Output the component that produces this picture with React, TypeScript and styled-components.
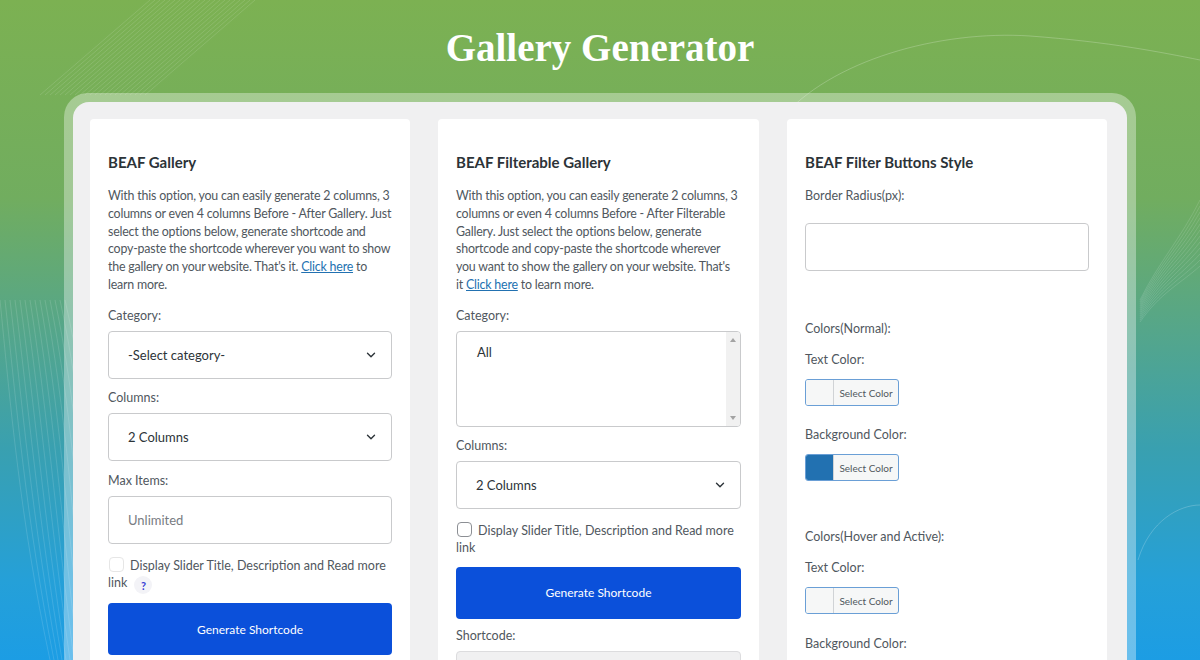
import React from 'react';
import styled, { createGlobalStyle } from 'styled-components';
import { ChevronDown } from 'lucide-react';

const GlobalStyle = createGlobalStyle`
  html, body {
    margin: 0;
    padding: 0;
    overflow: hidden;
  }
  * {
    box-sizing: border-box;
  }
  body {
    font-family: Lato, 'Noto Sans', sans-serif;
    color: #50575e;
  }
`;

const Decor = () => (
  <DecorSvg viewBox="0 0 1200 660" preserveAspectRatio="none">
    <g stroke="#ffffff" strokeOpacity="0.13" fill="none" strokeWidth="1">
      {Array.from({ length: 22 }).map((_, i) => (
        <line key={`d${i}`} x1={150 + i * 5} y1={0} x2={40 + i * 5} y2={95} />
      ))}
      <path d="M780 120 C 830 60, 940 30, 1030 36 C 1110 42, 1160 52, 1200 60" strokeOpacity="0.22" />
      {Array.from({ length: 14 }).map((_, i) => (
        <path
          key={`l${i}`}
          d={`M${i * 5} 300 C ${10 + i * 6} 400, ${20 + i * 6} 520, ${50 + i * 4} 660`}
        />
      ))}
      {Array.from({ length: 12 }).map((_, i) => (
        <path
          key={`r${i}`}
          d={`M1140 ${300 + i * 2} C 1160 ${260 + i * 3}, 1180 ${240 + i * 4}, 1200 ${200 + i * 6}`}
        />
      ))}
      <path d="M1138 560 C 1150 520, 1180 505, 1200 505" strokeOpacity="0.2" />
    </g>
  </DecorSvg>
);

const ColorButton = ({ swatch }: { swatch?: string }) => (
  <ColorPick>
    <Swatch $color={swatch} />
    <ColorText>Select Color</ColorText>
  </ColorPick>
);

const SelectBox = ({ value }: { value: string }) => (
  <Control>
    <span>{value}</span>
    <ChevronDown size={14} strokeWidth={2.4} color="#2c3338" />
  </Control>
);

export default function App() {
  return (
    <>
      <GlobalStyle />
      <Page>
        <Decor />
        <Title>Gallery Generator</Title>
        <Frame>
          <Panel>
            <Card>
              <CardTitle>BEAF Gallery</CardTitle>
              <Intro>
                With this option, you can easily generate 2 columns, 3<br />
                columns or even 4 columns Before - After Gallery. Just<br />
                select the options below, generate shortcode and<br />
                copy-paste the shortcode wherever you want to show<br />
                the gallery on your website. That's it. <a href="#">Click here</a> to<br />
                learn more.
              </Intro>
              <Label $mt={13}>Category:</Label>
              <SelectBox value="-Select category-" />
              <Label $mt={10}>Columns:</Label>
              <SelectBox value="2 Columns" />
              <Label $mt={11}>Max Items:</Label>
              <Control>
                <Placeholder>Unlimited</Placeholder>
              </Control>
              <CheckRow $mt={13}>
                <Check $faint />
                Display Slider Title, Description and Read more
                <br />
                link <Help>?</Help>
              </CheckRow>
              <GenerateButton $mt={9}>Generate Shortcode</GenerateButton>
            </Card>

            <Card>
              <CardTitle>BEAF Filterable Gallery</CardTitle>
              <Intro>
                With this option, you can easily generate 2 columns, 3<br />
                columns or even 4 columns Before - After Filterable<br />
                Gallery. Just select the options below, generate<br />
                shortcode and copy-paste the shortcode wherever<br />
                you want to show the gallery on your website. That's<br />
                it <a href="#">Click here</a> to learn more.
              </Intro>
              <Label $mt={13}>Category:</Label>
              <ListBox>
                <ListItem>All</ListItem>
                <ScrollTrack>
                  <Arrow $up />
                  <Arrow />
                </ScrollTrack>
              </ListBox>
              <Label $mt={10}>Columns:</Label>
              <SelectBox value="2 Columns" />
              <CheckRow $mt={13}>
                <Check />
                Display Slider Title, Description and Read more
                <br />
                link
              </CheckRow>
              <GenerateButton $mt={11}>Generate Shortcode</GenerateButton>
              <Label $mt={8}>Shortcode:</Label>
              <Control $disabled />
            </Card>

            <Card>
              <CardTitle>BEAF Filter Buttons Style</CardTitle>
              <Label $mt={15}>Border Radius(px):</Label>
              <Control $mt={12} />
              <Label $mt={49}>Colors(Normal):</Label>
              <Label $mt={7}>Text Color:</Label>
              <ColorButton />
              <Label $mt={20}>Background Color:</Label>
              <ColorButton swatch="#2271b1" />
              <Label $mt={47}>Colors(Hover and Active):</Label>
              <Label $mt={7}>Text Color:</Label>
              <ColorButton />
              <Label $mt={21}>Background Color:</Label>
            </Card>
          </Panel>
        </Frame>
      </Page>
    </>
  );
}

const Page = styled.div`
  position: relative;
  width: 100%;
  height: 660px;
  overflow: hidden;
  display: flex;
  flex-direction: column;
  align-items: center;
  background: linear-gradient(180deg, #7cb152 0%, #71ad5f 30%, #55a68a 50%, #39a0b0 68%, #25a0d8 88%, #1c9de4 100%);
`;

const DecorSvg = styled.svg`
  position: absolute;
  inset: 0;
  width: 100%;
  height: 100%;
  pointer-events: none;
`;

const Title = styled.h1`
  position: relative;
  margin: 0;
  padding-top: 26px;
  font-family: 'Liberation Serif', 'DejaVu Serif', serif;
  font-weight: 700;
  font-size: 39px;
  line-height: 44px;
  color: #ffffff;
`;

const Frame = styled.div`
  position: relative;
  margin-top: 23px;
  width: 1072px;
  flex: 1;
  padding: 9px 9px 0;
  border-radius: 24px 24px 0 0;
  background: rgba(255, 255, 255, 0.35);
  min-height: 0;
`;

const Panel = styled.div`
  height: 100%;
  display: grid;
  grid-template-columns: 320px 321px 320px;
  column-gap: 28px;
  padding: 17px 20px 0 17px;
  border-radius: 16px 16px 0 0;
  background: #f0f0f1;
  overflow: hidden;
`;

const Card = styled.div`
  display: flex;
  flex-direction: column;
  align-items: flex-start;
  padding: 33px 18px 0;
  background: #ffffff;
  border-radius: 4px 4px 0 0;
  font-size: 12.5px;
`;

const CardTitle = styled.h2`
  margin: 0;
  font-size: 15px;
  line-height: 20px;
  font-weight: 700;
  color: #2c3338;
`;

const Intro = styled.p`
  margin: 15px 0 0;
  font-size: 12.4px;
  letter-spacing: -0.2px;
  line-height: 17.8px;
  white-space: nowrap;
  color: #50575e;

  a {
    color: #2271b1;
    text-decoration: underline;
  }
`;

const Label = styled.div<{ $mt?: number }>`
  margin-top: ${({ $mt }) => $mt ?? 0}px;
  margin-bottom: 6px;
  line-height: 18px;
  color: #50575e;
`;

const Control = styled.div<{ $mt?: number; $disabled?: boolean }>`
  width: 100%;
  height: 48px;
  flex-shrink: 0;
  margin-top: ${({ $mt }) => $mt ?? 0}px;
  display: flex;
  align-items: center;
  justify-content: space-between;
  padding: 0 13px 0 19px;
  border: 1px solid ${({ $disabled }) => ($disabled ? '#dcdcde' : '#c9cacc')};
  border-radius: 4px;
  background: ${({ $disabled }) => ($disabled ? '#f0f0f1' : '#ffffff')};
  color: #2c3338;
  font-size: 13px;
`;

const Placeholder = styled.span`
  color: #787c82;
`;

const ListBox = styled.div`
  position: relative;
  width: 100%;
  height: 96px;
  flex-shrink: 0;
  border: 1px solid #c9cacc;
  border-radius: 4px;
  display: flex;
  justify-content: space-between;
  overflow: hidden;
`;

const ListItem = styled.div`
  padding: 12px 0 0 20px;
  color: #2c3338;
  font-size: 13px;
`;

const ScrollTrack = styled.div`
  width: 14px;
  height: 100%;
  background: #f1f1f1;
  display: flex;
  flex-direction: column;
  justify-content: space-between;
  align-items: center;
  padding: 6px 0;
`;

const Arrow = styled.span<{ $up?: boolean }>`
  width: 0;
  height: 0;
  border-left: 3px solid transparent;
  border-right: 3px solid transparent;
  ${({ $up }) => ($up ? 'border-bottom: 4px solid #a3a3a3;' : 'border-top: 4px solid #a3a3a3;')}
`;

const CheckRow = styled.div<{ $mt?: number }>`
  margin-top: ${({ $mt }) => $mt ?? 0}px;
  line-height: 17px;
  color: #50575e;
  white-space: nowrap;
`;

const Check = styled.span<{ $faint?: boolean }>`
  display: inline-block;
  width: 15px;
  height: 15px;
  margin: 0 6px 0 1px;
  vertical-align: -2px;
  border: 1px solid ${({ $faint }) => ($faint ? '#e6e6e6' : '#8c8f94')};
  border-radius: 4px;
  background: #ffffff;
`;

const Help = styled.span`
  display: inline-flex;
  align-items: center;
  justify-content: center;
  width: 18px;
  height: 18px;
  margin-left: 4px;
  vertical-align: -3px;
  border-radius: 50%;
  background: #f3f3f7;
  color: #3a3fd6;
  font-size: 11px;
  font-weight: 700;
`;

const GenerateButton = styled.button<{ $mt?: number }>`
  width: 100%;
  height: 52px;
  flex-shrink: 0;
  margin-top: ${({ $mt }) => $mt ?? 0}px;
  border: none;
  border-radius: 4px;
  background: #0b50da;
  color: #ffffff;
  font-family: inherit;
  font-size: 12px;
  cursor: pointer;
`;

const ColorPick = styled.div`
  display: flex;
  width: 94px;
  height: 27px;
  flex-shrink: 0;
  margin-top: 4px;
  border: 1px solid #6a9fd6;
  border-radius: 3px;
  overflow: hidden;
  background: #f6f7f7;
`;

const Swatch = styled.span<{ $color?: string }>`
  width: 28px;
  height: 100%;
  background: ${({ $color }) => $color ?? '#f6f7f7'};
  border-right: 1px solid #d0d3d6;
`;

const ColorText = styled.span`
  flex: 1;
  display: flex;
  align-items: center;
  justify-content: center;
  font-size: 10px;
  color: #50575e;
`;
